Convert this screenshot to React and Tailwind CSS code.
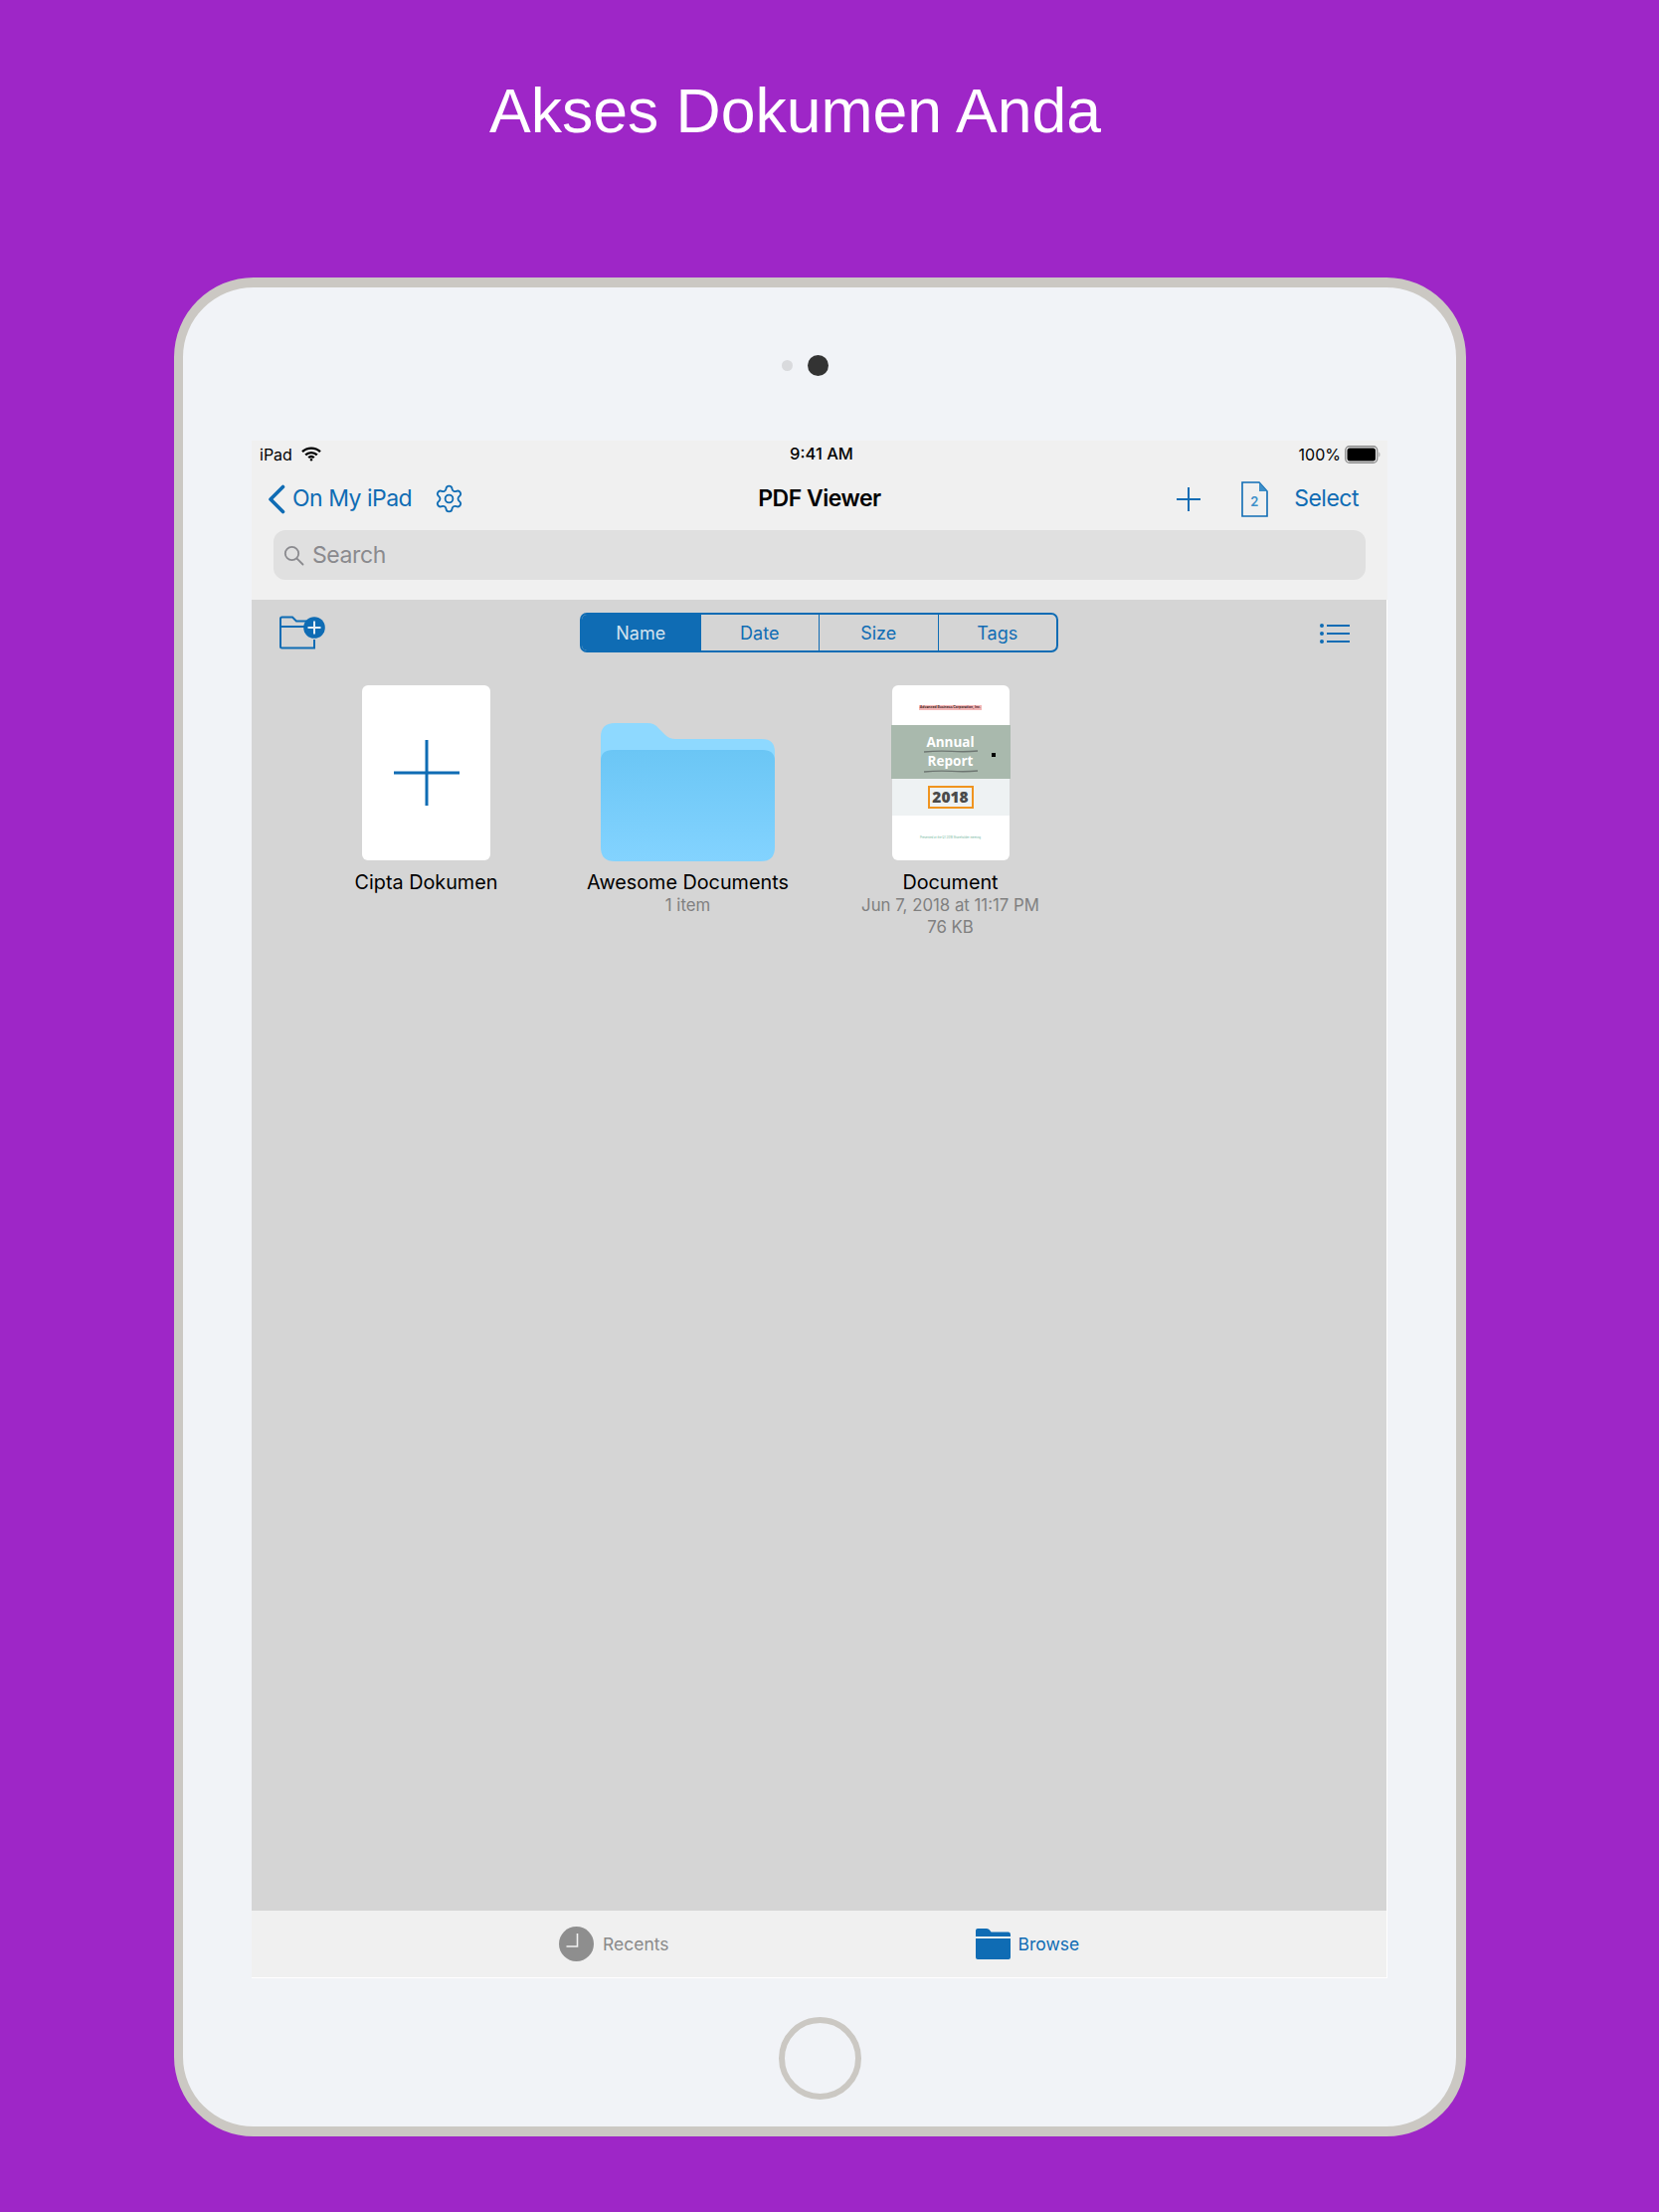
import React from "react";
import { Settings } from "lucide-react";

const BLUE = "#0f6cb4";

function Wifi() {
  return (
    <svg width="20" height="15" viewBox="0 0 20 15" fill="none" stroke="#000" strokeWidth="2.4">
      <path d="M1 5.2 A13 13 0 0 1 19 5.2" />
      <path d="M4.2 8.4 A8.5 8.5 0 0 1 15.8 8.4" />
      <path d="M7.2 11.2 A4.2 4.2 0 0 1 12.8 11.2" />
      <circle cx="10" cy="13.2" r="1.2" fill="#000" stroke="none" />
    </svg>
  );
}

function Battery() {
  return (
    <svg width="36" height="18" viewBox="0 0 36 18">
      <rect x="0.75" y="0.75" width="32" height="16.5" rx="4" fill="none" stroke="#8a8a8a" strokeWidth="1.3" />
      <rect x="2.5" y="2.5" width="28.5" height="13" rx="2.5" fill="#000" />
      <path d="M34.5 6.5 C35.6 7 35.6 11 34.5 11.5 Z" fill="#8a8a8a" />
    </svg>
  );
}

function Chevron() {
  return (
    <svg width="18" height="30" viewBox="0 0 18 30" fill="none" stroke={BLUE} strokeWidth="3.6" strokeLinecap="round" strokeLinejoin="round">
      <path d="M15.5 2.5 L3 15 L15.5 27.5" />
    </svg>
  );
}

function SearchGlyph() {
  return (
    <svg width="21" height="21" viewBox="0 0 21 21" fill="none" stroke="#8a8a8e" strokeWidth="1.8" strokeLinecap="round">
      <circle cx="8.5" cy="8.5" r="6.7" />
      <path d="M13.6 13.6 L19.5 19.5" />
    </svg>
  );
}

function Plus({ size, stroke }) {
  return (
    <svg width={size} height={size} viewBox={`0 0 ${size} ${size}`} stroke={BLUE} strokeWidth={stroke}>
      <path d={`M${size / 2} 0 V${size} M0 ${size / 2} H${size}`} />
    </svg>
  );
}

function DocIcon() {
  return (
    <svg width="27" height="36" viewBox="0 0 27 36">
      <path d="M1 1 H18 L26 10 V35 H1 Z" fill="none" stroke={BLUE} strokeWidth="1.6" />
      <path d="M18 1 L26 10 H18 Z" fill="#3d8fc9" />
      <text x="13" y="25" textAnchor="middle" fontSize="13" fontWeight="600" fill="#3d8fc9" fontFamily="Inter, sans-serif">2</text>
    </svg>
  );
}

function NewFolder() {
  return (
    <svg width="47" height="34" viewBox="0 0 47 34" fill="none">
      <path d="M2 11 V3 Q2 1.5 3.5 1.5 H14 L18 5.5 H28 M2 11 H28 M2 11 V31 Q2 32.5 3.5 32.5 H36 V24" stroke={BLUE} strokeWidth="2" />
      <circle cx="36" cy="12" r="10.8" fill={BLUE} />
      <path d="M36 5.5 V18.5 M29.5 12 H42.5" stroke="#e6eef5" strokeWidth="2" />
    </svg>
  );
}

function ListIcon() {
  return (
    <svg width="30" height="20" viewBox="0 0 30 20" fill={BLUE}>
      <circle cx="2" cy="2" r="2" />
      <circle cx="2" cy="10" r="2" />
      <circle cx="2" cy="18" r="2" />
      <rect x="7" y="1" width="23" height="2" />
      <rect x="7" y="9" width="23" height="2" />
      <rect x="7" y="17" width="23" height="2" />
    </svg>
  );
}

function BlueFolder() {
  return (
    <svg width="175" height="139" viewBox="0 0 175 139">
      <path d="M0 14 Q0 0 14 0 H47 Q54 0 58 5 L65 12 Q69 16 75 16 H162 Q175 16 175 29 V60 H0 Z" fill="#8ed9ff" />
      <path d="M0 38 Q0 27 12 27 H163 Q175 27 175 38 V125 Q175 139 161 139 H14 Q0 139 0 125 Z" fill="url(#fg)" />
      <defs>
        <linearGradient id="fg" x1="0" y1="0" x2="0" y2="1">
          <stop offset="0" stopColor="#6bc6f5" />
          <stop offset="1" stopColor="#83d3ff" />
        </linearGradient>
      </defs>
    </svg>
  );
}

function Clock() {
  return (
    <svg width="35" height="35" viewBox="0 0 35 35">
      <circle cx="17.5" cy="17.5" r="17.5" fill="#8e8e8e" />
      <path d="M18.5 7 V20 H7.5" fill="none" stroke="#f2f2f2" strokeWidth="1.6" />
    </svg>
  );
}

function BrowseFolder() {
  return (
    <svg width="35" height="31" viewBox="0 0 35 31" fill={BLUE}>
      <path d="M0 8 V2 Q0 0 2 0 H11 Q13 0 14 1.5 L15.5 3.5 H33 Q35 3.5 35 6 V8 Z" />
      <path d="M0 10 H35 V29 Q35 31 33 31 H2 Q0 31 0 29 Z" />
    </svg>
  );
}

function Scribble({ className }) {
  return (
    <svg className={className} width="54" height="3" viewBox="0 0 54 3" fill="none" stroke="#6e7672" strokeWidth="1.4">
      <path d="M0 2 Q14 0.6 28 1.4 T54 1" />
    </svg>
  );
}

function Thumbnail() {
  return (
    <div className="relative flex h-[176px] w-[118px] flex-col items-center rounded-[6px] bg-white">
      <div className="flex h-[40px] items-center pt-[4px]">
        <span className="whitespace-nowrap bg-[#f4b6b6] px-[1px] text-[3.4px] leading-[5px] font-bold text-[#4a2a2a]">Advanced Business Corporation, Inc.</span>
      </div>
      <div className="relative -mx-[1px] flex h-[54px] w-[120px] flex-col items-center bg-[#a9b9ad] pt-[10px] text-[13.5px] leading-[19px] font-bold text-white" style={{ fontFamily: '"Open Sans", sans-serif' }}>
        <span className="leading-[15px]">Annual</span>
        <Scribble />
        <span className="mt-[1px] leading-[15px]">Report</span>
        <Scribble className="mt-[1px]" />
        <span className="absolute top-[28px] left-[101px] h-[4px] w-[4px] bg-black" />
      </div>
      <div className="-mx-[1px] flex h-[37px] w-[118px] items-center justify-center bg-[#eef2f3]">
        <span className="flex h-[23px] w-[46px] items-center justify-center border-2 border-[#f0941f] text-[15.5px] font-extrabold text-[#4a4a4a]" style={{ fontFamily: '"Open Sans", sans-serif' }}>2018</span>
      </div>
      <div className="flex flex-1 items-center">
        <span className="whitespace-nowrap text-[2.8px] leading-[5px] text-[#74b8a0]">Presented at the Q1 2018 Shareholder meeting</span>
      </div>
    </div>
  );
}

function Item({ art, label, sub, className = "" }) {
  return (
    <div className={`flex w-[263px] flex-col items-center ${className}`}>
      <div className="flex h-[177px] items-end">{art}</div>
      <div className="mt-[9px] text-[19.8px] leading-[24px] whitespace-nowrap text-black">{label}</div>
      {sub.map((s) => (
        <div key={s} className="text-[16.8px] leading-[22px] whitespace-nowrap text-[#808080]">{s}</div>
      ))}
    </div>
  );
}

function Segment({ label, active, last }) {
  return (
    <div
      className={`flex h-full flex-1 items-center justify-center text-[18px] ${active ? "bg-[#0f6cb4] text-[#d3e3ef]" : "text-[#0f6cb4]"} ${last ? "" : "border-r border-[#0f6cb4]"}`}
    >
      {label}
    </div>
  );
}

export default function App() {
  return (
    <div className="flex h-[2224px] w-[1668px] flex-col overflow-hidden bg-[#9e26c7]" style={{ fontFamily: 'Inter, "Noto Sans", sans-serif' }}>
      <div className="h-[279px] pt-[75px] pl-[492px]">
        <h1 className="text-[62.5px] leading-[72px] font-normal whitespace-nowrap text-white" style={{ fontFamily: '"Liberation Sans", Arial, sans-serif' }}>
          Akses Dokumen Anda
        </h1>
      </div>

      <div className="ml-[175px] flex h-[1869px] w-[1299px] flex-col items-center rounded-[80px] border-[10px] border-l-[9px] border-[#cbc8c3] bg-[#f1f3f7]">
        <div className="flex h-[154px] items-center gap-[15px] pt-[2px] pr-[29px]">
          <span className="h-[11px] w-[11px] rounded-full bg-[#d9dadd]" />
          <span className="h-[21px] w-[21px] rounded-full bg-[#333333]" />
        </div>

        <div className="flex h-[1546px] w-[1142px] flex-col">
          <div className="bg-[#f0f0f0]">
            <div className="flex h-[27px] items-center justify-between pr-[7px] pl-[8px] text-[16px] text-black">
              <div className="flex flex-1 items-center gap-[9px]">
                <span>iPad</span>
                <Wifi />
              </div>
              <span className="ml-[3px] text-[16.5px] font-medium">9:41 AM</span>
              <div className="flex flex-1 items-center justify-end gap-[4px]">
                <span>100%</span>
                <Battery />
              </div>
            </div>
            <div className="flex h-[63px] items-center text-[23px] tracking-[-0.5px] text-[#0f6cb4]">
              <div className="flex flex-1 items-center">
                <div className="ml-[16px] flex items-center">
                  <Chevron />
                  <span className="ml-[7px]">On My iPad</span>
                  <span className="ml-[22px]"><Settings size={31} strokeWidth={1.4} color={BLUE} /></span>
                </div>
              </div>
              <span className="font-semibold text-black">PDF Viewer</span>
              <div className="flex flex-1 items-center justify-end">
                <div className="mr-[29px] flex items-center">
                  <Plus size={24} stroke={2} />
                  <span className="mr-[26px] ml-[41px]"><DocIcon /></span>
                  <span>Select</span>
                </div>
              </div>
            </div>
            <div className="px-[22px] pb-[20px]">
              <div className="flex h-[50px] w-[1098px] items-center rounded-[12px] bg-[#e0e0e0] pl-[10px] text-[23px] tracking-[-0.4px] text-[#8a8a8e]">
                <SearchGlyph />
                <span className="ml-[8px]">Search</span>
              </div>
            </div>
          </div>

          <div className="flex-1 border-r border-white bg-[#d5d5d5]">
            <div className="flex h-[86px] items-start pt-[13px]">
              <div className="flex-1 pt-[3px]"><div className="ml-[27px] w-[47px]"><NewFolder /></div></div>
              <div className="flex h-[40px] w-[481px] overflow-hidden rounded-[7px] border-2 border-[#0f6cb4]">
                <Segment label="Name" active />
                <Segment label="Date" />
                <Segment label="Size" />
                <Segment label="Tags" last />
              </div>
              <div className="flex flex-1 justify-end pt-[11px]"><div className="mr-[37px]"><ListIcon /></div></div>
            </div>
            <div className="flex pl-[44px]">
              <Item
                art={
                  <div className="mb-[1px] flex h-[176px] w-[129px] items-center justify-center rounded-[6px] bg-white">
                    <Plus size={66} stroke={3} />
                  </div>
                }
                label="Cipta Dokumen"
                sub={[]}
              />
              <Item art={<BlueFolder />} label="Awesome Documents" sub={["1 item"]} />
              <Item className="ml-[1px]" art={<div className="mb-[1px]"><Thumbnail /></div>} label="Document" sub={["Jun 7, 2018 at 11:17 PM", "76 KB"]} />
            </div>
          </div>

          <div className="flex h-[68px] items-center border-r border-b border-white bg-[#f0f0f0] text-[17.5px]">
            <div className="ml-[309px] flex items-center gap-[9px] text-[#8a8a8a]">
              <Clock />
              <span className="pt-[2px]">Recents</span>
            </div>
            <div className="ml-[308px] flex items-center gap-[8px] text-[#0f6cb4]">
              <BrowseFolder />
              <span className="pt-[2px]">Browse</span>
            </div>
          </div>
        </div>

        <div className="mt-[39px] h-[83px] w-[83px] rounded-full border-[6px] border-[#cbc8c3]" />
      </div>
    </div>
  );
}
